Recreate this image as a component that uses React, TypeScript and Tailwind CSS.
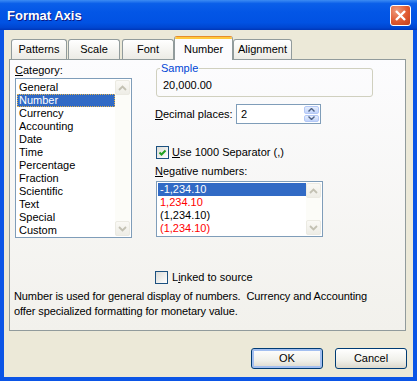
import React from 'react';

// Format Axis dialog, Windows XP look
const categorias = ['General', 'Number', 'Currency', 'Accounting', 'Date', 'Time', 'Percentage', 'Fraction', 'Scientific', 'Text', 'Special', 'Custom'];

const negativos = [
  { texto: '-1,234.10', rojo: false, sel: true },
  { texto: '1,234.10', rojo: true, sel: false },
  { texto: '(1,234.10)', rojo: false, sel: false },
  { texto: '(1,234.10)', rojo: true, sel: false },
];

function Flecha({ arriba }: { arriba?: boolean }) {
  return (
    <svg width="9" height="6" viewBox="0 0 9 6">
      <path d={arriba ? 'M1 5L4.5 1.5L8 5' : 'M1 1L4.5 4.5L8 1'} fill="none" stroke="#C3C1B3" strokeWidth="1.8" />
    </svg>
  );
}

function BotonScroll({ arriba }: { arriba?: boolean }) {
  return (
    <div className="flex h-[15px] w-[15px] items-center justify-center rounded-[2px] border border-[#EBEAE2] bg-[linear-gradient(to_bottom,#FAF9F5,#EEEDE6)]">
      <Flecha arriba={arriba} />
    </div>
  );
}

function BarraScroll() {
  return (
    <div className="flex w-[15px] shrink-0 flex-col justify-between bg-[#FCFCF8]">
      <BotonScroll arriba />
      <BotonScroll />
    </div>
  );
}

function Casilla({ marcada }: { marcada?: boolean }) {
  return (
    <span className="flex h-[13px] w-[13px] shrink-0 items-center justify-center border border-[#1C5180] bg-[linear-gradient(135deg,#DCDCD7,#FFFFFF)]">
      {marcada && (
        <svg width="11" height="11" viewBox="0 0 11 11">
          <path d="M2.5 5.5L4.5 7.5L8.5 3.5" fill="none" stroke="#21A121" strokeWidth="2" />
        </svg>
      )}
    </span>
  );
}

function Pestana({ texto, cls, activa }: { texto: string; cls: string; activa?: boolean }) {
  if (activa) {
    return (
      <div className={`relative z-10 -mb-px flex h-[24px] flex-col overflow-hidden rounded-t-[3px] border border-b-0 border-[#919B9C] border-t-[#E68B2C] bg-[#FCFCFE] ${cls}`}>
        <div className="h-[2px] bg-[#FFC83C]" />
        <div className="pt-[4px] text-center">{texto}</div>
      </div>
    );
  }
  return (
    <div className={`h-[20px] rounded-t-[3px] border border-b-0 border-[#919B9C] bg-[linear-gradient(to_bottom,#FFFFFF,#ECEBE5)] pt-[3px] text-center ${cls}`}>
      {texto}
    </div>
  );
}

export default function App() {
  return (
    <div className="flex h-[381px] w-[417px] select-none flex-col font-['Liberation_Sans',Arial,sans-serif] text-[11px] leading-[13px] text-black">
      {/* BARRA DE TITULO */}
      <div className="flex h-[30px] shrink-0 items-center justify-between bg-[linear-gradient(to_bottom,#3C8CF3_0%,#0A5FE9_12%,#0356E6_40%,#0152E3_75%,#0046D1_92%,#0036B8_100%)] pl-[7px] pr-[6px]">
        <span className="text-[13px] font-bold text-white [text-shadow:1px_1px_0_#0A1883]">Format Axis</span>
        <div className="flex h-[21px] w-[21px] items-center justify-center rounded-[3px] border border-white bg-[radial-gradient(circle_at_30%_25%,#EE9A7C,#E05A30_55%,#C43E1A)]">
          <svg width="19" height="19" viewBox="0 0 19 19">
            <path d="M5 5L14 14M14 5L5 14" stroke="#FFFFFF" strokeWidth="2.4" />
          </svg>
        </div>
      </div>

      {/* CUERPO */}
      <div className="flex flex-1 flex-col border-x-4 border-b-4 border-[#0B55E6] bg-[#ECE9D8] pt-[6px]">
        {/* PESTAÑAS */}
        <div className="flex h-[23px] items-end pl-[7px]">
          <Pestana texto="Patterns" cls="w-[56px]" />
          <Pestana texto="Scale" cls="ml-[1px] w-[52px]" />
          <Pestana texto="Font" cls="ml-[2px] w-[52px]" />
          <Pestana texto="Number" cls="w-[59px]" activa />
          <Pestana texto="Alignment" cls="w-[59px]" />
        </div>

        {/* PANEL */}
        <div className="ml-[5px] flex h-[272px] w-[397px] flex-col border border-[#919B9C] bg-[linear-gradient(to_bottom,#FCFCFE,#F2F1EC)]">
          <div className="flex">
            {/* columna izquierda */}
            <div className="ml-[5px] flex flex-col">
              <div className="mt-[4px]">
                <span className="underline">C</span>ategory:
              </div>
              <div className="mt-px flex h-[160px] w-[117px] border border-[#7F9DB9] bg-white p-px">
                <div className="flex flex-1 flex-col pt-px">
                  {categorias.map((c) => (
                    <div
                      key={c}
                      className={c === 'Number' ? 'h-[13px] bg-[#316AC5] pl-[2px] text-white outline outline-1 -outline-offset-1 outline-dotted outline-[#E2B24E]' : 'h-[13px] pl-[2px]'}
                    >
                      {c}
                    </div>
                  ))}
                </div>
                <BarraScroll />
              </div>
            </div>

            {/* columna derecha */}
            <div className="ml-[23px] flex flex-col">
              <fieldset className="ml-px mt-[2px] w-[217px] rounded-[3px] border border-[#D0D0BF] px-0 pb-[4px] pt-[4px]">
                <legend className="ml-[3px] px-px text-[#0046D5]">Sample</legend>
                <div className="pl-[6px]">20,000.00</div>
              </fieldset>

              <div className="mt-[7px] flex items-center">
                <div className="w-[81px]">
                  <span className="underline">D</span>ecimal places:
                </div>
                <div className="flex h-[20px] w-[85px] border border-[#7F9DB9] bg-white">
                  <div className="flex-1 pl-[4px] leading-[18px]">2</div>
                  <div className="flex w-[17px] flex-col gap-px p-px">
                    <div className="flex flex-1 items-center justify-center rounded-[2px] border border-[#B4C8F6] bg-[linear-gradient(to_bottom,#E6EEFC,#C1D3FB)]">
                      <svg width="7" height="4" viewBox="0 0 7 4">
                        <path d="M0.5 3.5L3.5 0.5L6.5 3.5" fill="none" stroke="#4D6185" strokeWidth="1.4" />
                      </svg>
                    </div>
                    <div className="flex flex-1 items-center justify-center rounded-[2px] border border-[#B4C8F6] bg-[linear-gradient(to_bottom,#E6EEFC,#C1D3FB)]">
                      <svg width="7" height="4" viewBox="0 0 7 4">
                        <path d="M0.5 0.5L3.5 3.5L6.5 0.5" fill="none" stroke="#4D6185" strokeWidth="1.4" />
                      </svg>
                    </div>
                  </div>
                </div>
              </div>

              <div className="ml-px mt-[22px] flex items-center gap-[3px]">
                <Casilla marcada />
                <div>
                  <span className="underline">U</span>se 1000 Separator (,)
                </div>
              </div>

              <div className="mt-[6px]">
                <span className="underline">N</span>egative numbers:
              </div>
              <div className="ml-px mt-[3px] flex h-[56px] w-[167px] border border-[#7F9DB9] bg-white p-px">
                <div className="flex flex-1 flex-col">
                  {negativos.map((n, i) => (
                    <div
                      key={i}
                      className={n.sel ? 'h-[13px] bg-[#316AC5] pl-[2px] text-white' : n.rojo ? 'h-[13px] pl-[2px] text-[#FF0000]' : 'h-[13px] pl-[2px]'}
                    >
                      {n.texto}
                    </div>
                  ))}
                </div>
                <BarraScroll />
              </div>
            </div>
          </div>

          <div className="ml-[145px] mt-[33px] flex items-center gap-[4px]">
            <Casilla />
            <div>
              L<span className="underline">i</span>nked to source
            </div>
          </div>

          <div className="ml-[4px] mt-[5px] whitespace-pre leading-[15px] tracking-[-0.1px]">
            {'Number is used for general display of numbers.  Currency and Accounting\noffer specialized formatting for monetary value.'}
          </div>
        </div>

        {/* BOTONES */}
        <div className="mt-[17px] flex justify-end gap-[12px] pr-[6px]">
          <button className="h-[21px] w-[72px] rounded-[3px] border border-[#003C74] bg-[linear-gradient(to_bottom,#FFFFFF,#F0F0EA_60%,#DCD8CC)] text-[11px] shadow-[inset_0_0_0_2px_#A3BFF0]">
            OK
          </button>
          <button className="h-[21px] w-[72px] rounded-[3px] border border-[#003C74] bg-[linear-gradient(to_bottom,#FFFFFF,#F0F0EA_60%,#DCD8CC)] text-[11px]">
            Cancel
          </button>
        </div>
      </div>
    </div>
  );
}
